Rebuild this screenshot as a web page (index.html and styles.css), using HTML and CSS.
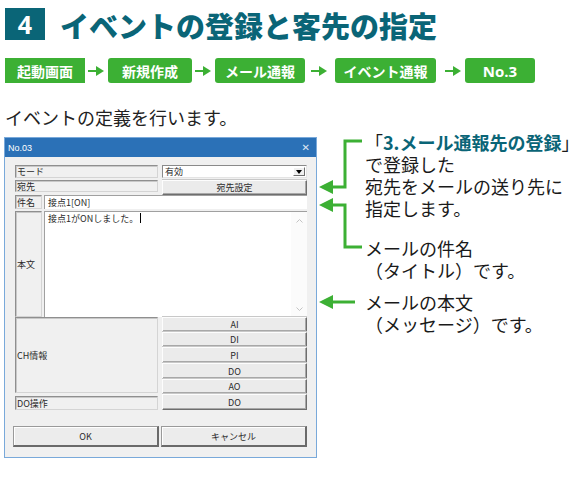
FILE: index.html
```html
<!DOCTYPE html>
<html lang="ja">
<head>
<meta charset="utf-8">
<link rel="stylesheet" href="styles.css">
</head>
<body>
<div class="page">
  <header class="head">
    <div class="num">4</div>
    <h1 class="title">イベントの登録と客先の指定</h1>
  </header>

  <nav class="crumbs">
    <span class="crumb w1">起動画面</span>
    <svg class="arr" width="16" height="10" viewBox="0 0 16 10"><path d="M0 5H9" stroke="#3cb034" stroke-width="2"/><path d="M8 0L16 5L8 10Z" fill="#3cb034"/></svg>
    <span class="crumb w2">新規作成</span>
    <svg class="arr" width="16" height="10" viewBox="0 0 16 10"><path d="M0 5H9" stroke="#3cb034" stroke-width="2"/><path d="M8 0L16 5L8 10Z" fill="#3cb034"/></svg>
    <span class="crumb w3">メール通報</span>
    <svg class="arr arr-b" width="16" height="10" viewBox="0 0 16 10"><path d="M0 5H9" stroke="#3cb034" stroke-width="2"/><path d="M8 0L16 5L8 10Z" fill="#3cb034"/></svg>
    <span class="crumb w4">イベント通報</span>
    <svg class="arr arr-c" width="16" height="10" viewBox="0 0 16 10"><path d="M0 5H9" stroke="#3cb034" stroke-width="2"/><path d="M8 0L16 5L8 10Z" fill="#3cb034"/></svg>
    <span class="crumb w5">No.3</span>
  </nav>

  <p class="lead">イベントの定義を行います。</p>

  <div class="main">
    <div class="dialog">
      <div class="titlebar"><span class="dtitle">No.03</span><span class="close">✕</span></div>
      <div class="dbody">
        <div class="row r1">
          <div class="lbl wide">モード</div>
          <div class="select"><span class="sel-text">有効</span><span class="drop"><svg width="6" height="4" viewBox="0 0 6 4"><path d="M0 0H6L3 4Z" fill="#000"/></svg></span></div>
        </div>
        <div class="row r2">
          <div class="lbl wide">宛先</div>
          <div class="btn ctl">宛先設定</div>
        </div>
        <div class="row r3">
          <div class="lbl narrow">件名</div>
          <div class="input">接点1[ON]</div>
        </div>
        <div class="row r4">
          <div class="lbl narrow">本文</div>
          <div class="textarea">
            <div class="ta-text">接点1がONしました。<span class="caret"></span></div>
            <div class="scroll">
              <svg width="7" height="5" viewBox="0 0 7 5"><path d="M0.5 4.5L3.5 1.5L6.5 4.5" fill="none" stroke="#c4c4c4"/></svg>
              <svg width="7" height="5" viewBox="0 0 7 5"><path d="M0.5 0.5L3.5 3.5L6.5 0.5" fill="none" stroke="#c4c4c4"/></svg>
            </div>
          </div>
        </div>
        <div class="row r5">
          <div class="lbl wide ch">CH情報</div>
          <div class="btncol">
            <div class="btn b15">AI</div>
            <div class="btn b15">DI</div>
            <div class="btn b16">PI</div>
            <div class="btn b16">DO</div>
            <div class="btn b15">AO</div>
          </div>
        </div>
        <div class="row r6">
          <div class="lbl wide do">DO操作</div>
          <div class="btn ctl">DO</div>
        </div>
        <div class="row r7">
          <div class="bigbtn">OK</div>
          <div class="bigbtn">キャンセル</div>
        </div>
      </div>
    </div>

    <div class="notes">
      <svg class="leaders" width="48" height="180" viewBox="0 0 48 180">
        <path d="M45 10H28V56H15" fill="none" stroke="#3cb034" stroke-width="3"/>
        <path d="M2 56L16 49V63Z" fill="#3cb034"/>
        <path d="M45 116H28V74H15" fill="none" stroke="#3cb034" stroke-width="3"/>
        <path d="M2 74L16 67V81Z" fill="#3cb034"/>
        <path d="M38 171H15" fill="none" stroke="#3cb034" stroke-width="3"/>
        <path d="M2 171L16 164V178Z" fill="#3cb034"/>
      </svg>
      <div class="note n1">
        <span class="ln"><span class="qt">「</span><b class="ref">3.メール通報先の登録</b><span class="qt">」</span></span>
        <span class="ln">で登録した</span>
        <span class="ln">宛先をメールの送り先に</span>
        <span class="ln">指定します。</span>
      </div>
      <div class="note n2">
        <span class="ln">メールの件名</span>
        <span class="ln">（タイトル）です。</span>
      </div>
      <div class="note n3">
        <span class="ln">メールの本文</span>
        <span class="ln">（メッセージ）です。</span>
      </div>
    </div>
  </div>
</div>
</body>
</html>
```

FILE: styles.css
```css
* { box-sizing: border-box; }

html, body {
  margin: 0;
  padding: 0;
  background: #ffffff;
}

body {
  width: 581px;
  height: 480px;
  overflow: hidden;
  font-family: "Noto Sans CJK JP", "Noto Sans", sans-serif;
  color: #1a1a1a;
}

.page {
  width: 581px;
}

/* header */
.head {
  display: flex;
  align-items: flex-start;
  padding: 8px 0 0 5px;
  height: 40px;
}

.num {
  width: 40px;
  height: 32px;
  background: #0a6577;
  color: #ffffff;
  font-family: "Open Sans", "Noto Sans", sans-serif;
  font-weight: 700;
  font-size: 25px;
  line-height: 32px;
  text-align: center;
  flex: none;
}

.title {
  margin: 0 0 0 15px;
  padding-top: 1px;
  font-size: 29px;
  line-height: 32px;
  font-weight: 900;
  color: #0a6577;
  white-space: nowrap;
}

/* breadcrumbs */
.crumbs {
  display: flex;
  align-items: center;
  margin-top: 18px;
  padding-left: 5px;
  height: 25px;
}

.crumb {
  height: 25px;
  background: #3cb034;
  color: #ffffff;
  font-size: 14px;
  font-weight: 700;
  border-radius: 3px;
  display: flex;
  align-items: center;
  justify-content: center;
  white-space: nowrap;
  flex: none;
}

.crumb.w1 { width: 80px; border-radius: 0; }
.crumb.w2 { width: 84px; }
.crumb.w3 { width: 90px; }
.crumb.w4 { width: 101px; }
.crumb.w5 { width: 70px; font-family: "Open Sans", "Noto Sans", sans-serif; font-size: 15px; }

.arr { flex: none; margin: 0 4px 0 3px; }
.arr.arr-b { margin: 0 8px 0 6px; }
.arr.arr-c { margin: 0 4px 0 9px; }

/* lead */
.lead {
  margin: 23px 0 0 5px;
  font-size: 18px;
  line-height: 22px;
  color: #222222;
  white-space: nowrap;
}

/* main */
.main {
  display: flex;
  margin-top: 3px;
}

.dialog {
  flex: none;
  width: 313px;
  height: 321px;
  margin: 6px 0 0 4px;
  border: 1px solid #79a9da;
  background: #f0f0f0;
  font-size: 9px;
  color: #2a2a2a;
}

.titlebar {
  height: 19px;
  background: #2b71b7;
  display: flex;
  align-items: center;
  justify-content: space-between;
  padding: 0 6px 0 3px;
  color: #ffffff;
}

.dtitle {
  font-family: "Liberation Sans", "Noto Sans", sans-serif;
  font-size: 9px;
}

.close {
  font-family: "DejaVu Sans", sans-serif;
  font-size: 10px;
  color: #dce7f4;
}

.dbody {
  padding: 8px 9px 0 10px;
}

.row {
  display: flex;
}

.r1 { height: 13px; margin-bottom: 2px; gap: 4px; }
.r2 { height: 15px; gap: 4px; }
.r3 { height: 14px; margin-bottom: 2px; gap: 2px; }
.r4 { height: 106px; gap: 2px; }
.r5 { height: 77px; gap: 4px; }
.r6 { height: 16px; gap: 4px; }
.r7 { height: 21px; margin: 16px 0 0 -2px; gap: 2px; }

.lbl {
  display: flex;
  align-items: center;
  padding-left: 1px;
  border-style: solid;
  border-width: 1px;
  border-color: #8f8f8f #d4d4d4 #d4d4d4 #8f8f8f;
  box-shadow: inset 1px 1px 0 #c8c8c8;
  white-space: nowrap;
  flex: none;
}

.lbl.wide { width: 143px; }
.lbl.narrow { width: 27px; }
.r2 .lbl { height: 12px; }
.lbl.ch { height: 76px; }
.lbl.do { margin-top: 2px; height: 14px; }

.select {
  width: 145px;
  background: #ffffff;
  border: 1px solid;
  border-color: #8a8a8a #e4e4e4 #e4e4e4 #8a8a8a;
  display: flex;
  align-items: center;
  justify-content: space-between;
  padding: 0 1px 0 2px;
}

.drop {
  width: 12px;
  height: 9px;
  background: #f0f0f0;
  border: 1px solid;
  border-color: #ffffff #707070 #707070 #ffffff;
  display: flex;
  align-items: center;
  justify-content: center;
}

.btn {
  background: #ebebeb;
  border: 1px solid;
  border-color: #fdfdfd #6e6e6e #6e6e6e #fdfdfd;
  box-shadow: inset -1px -1px 0 #a8a8a8, 0 -1px 0 #c8c8c8;
  display: flex;
  align-items: center;
  justify-content: center;
  white-space: nowrap;
}

.btn.ctl { width: 145px; }

.btncol {
  width: 145px;
  display: flex;
  flex-direction: column;
}

.b15 { height: 15px; }
.b16 { height: 16px; }

.input {
  width: 263px;
  background: #ffffff;
  border-top: 1px solid #a0a0a0;
  border-left: 1px solid #a0a0a0;
  display: flex;
  align-items: center;
  padding-left: 3px;
  white-space: nowrap;
}

.textarea {
  width: 263px;
  background: #ffffff;
  border-top: 1px solid #a0a0a0;
  border-left: 1px solid #a0a0a0;
  display: flex;
}

.ta-text {
  flex: 1;
  padding: 1px 0 0 3px;
  line-height: 12px;
  white-space: nowrap;
}

.caret {
  display: inline-block;
  width: 0;
  height: 10px;
  border-left: 1px solid #000000;
  margin-left: 2px;
  vertical-align: -1px;
}

.scroll {
  width: 16px;
  background: #fbfbfb;
  display: flex;
  flex-direction: column;
  justify-content: space-between;
  align-items: center;
  padding: 6px 0 5px;
}

.bigbtn {
  width: 146px;
  background: #ececec;
  border-style: solid;
  border-width: 1px 2px 2px 1px;
  border-color: #9a9a9a #6a6a6a #6a6a6a #9a9a9a;
  box-shadow: inset 1px 1px 0 #ffffff;
  display: flex;
  align-items: center;
  justify-content: center;
  white-space: nowrap;
}

/* notes */
.notes {
  position: relative;
  flex: 1;
  padding-left: 48px;
}

.leaders {
  position: absolute;
  left: 0;
  top: 0;
}

.note {
  font-size: 18px;
  line-height: 22px;
  color: #1a1a1a;
  white-space: nowrap;
}

.ln {
  display: block;
  height: 22px;
}

.n2 { margin-top: 18px; }
.n3 { margin-top: 10px; }

.ref {
  color: #0a6577;
  font-weight: 700;
}

.qt { font-weight: 400; }
```
